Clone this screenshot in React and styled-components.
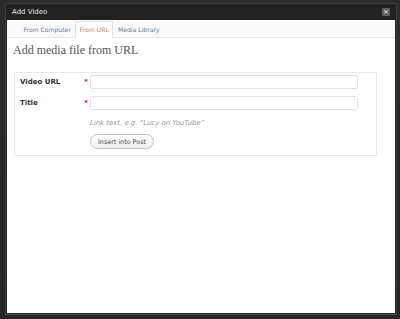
import React from "react";
import styled, { createGlobalStyle } from "styled-components";

const GlobalStyle = createGlobalStyle`
  html, body {
    margin: 0;
    padding: 0;
    width: 400px;
    height: 319px;
    overflow: hidden;
    background: #2a2a2a;
    font-family: "DejaVu Sans", "Liberation Sans", sans-serif;
  }
`;

const Page = styled.div`
  width: 400px;
  height: 319px;
  padding: 3px 3px 4px 5px;
  box-sizing: border-box;
  background: linear-gradient(#2c2c2c, #262626);
`;

const Dialog = styled.div`
  height: 100%;
  display: flex;
  flex-direction: column;
  border: 1px solid #3c3c3c;
  border-bottom-color: #555;
  background: #222;
  box-sizing: border-box;
  padding: 0 1px 1px 1px;
`;

const TitleBar = styled.div`
  height: 16px;
  display: flex;
  align-items: center;
  justify-content: space-between;
  padding: 0 5px 0 5px;
  color: #e6e6e6;
  font-size: 7px;
`;

const Close = styled.div`
  width: 8px;
  height: 8px;
  border-radius: 1px;
  background: #5e5e5e;
  color: #cfcfcf;
  display: flex;
  align-items: center;
  justify-content: center;
  font-size: 7px;
  font-weight: bold;
  line-height: 1;
`;

const Content = styled.div`
  flex: 1;
  background: #fff;
  display: flex;
  flex-direction: column;
`;

const Tabs = styled.div`
  height: 18px;
  display: flex;
  align-items: flex-end;
  padding-left: 12px;
  background: #f9f9f9;
  border-bottom: 1px solid #e3e3e3;
  box-sizing: border-box;
`;

const Tab = styled.div`
  height: 17px;
  display: flex;
  align-items: center;
  padding: 0 3.5px;
  margin-bottom: -1px;
  font-size: 6.1px;
  color: ${(p) => (p.$active ? "#e07a5a" : "#5d7f99")};
  background: ${(p) => (p.$active ? "#fff" : "transparent")};
  border: 1px solid ${(p) => (p.$active ? "#e3e3e3" : "transparent")};
  border-bottom-color: ${(p) => (p.$active ? "#fff" : "transparent")};
  border-radius: 2px 2px 0 0;
  box-sizing: border-box;
`;

const Heading = styled.h3`
  margin: 5px 0 0 6px;
  font-family: "Liberation Serif", "DejaVu Serif", serif;
  font-weight: normal;
  font-size: 12px;
  color: #555;
`;

const Box = styled.div`
  margin: 14px 18px 0 7px;
  border: 1px solid #e8e8e8;
  padding: 2px 18px 6px 5px;
  display: grid;
  grid-template-columns: 70px 1fr;
  row-gap: 7px;
`;

const Label = styled.div`
  display: flex;
  justify-content: space-between;
  align-items: center;
  font-size: 7px;
  font-weight: bold;
  color: #333;
  padding-right: 2px;
`;

const Star = styled.span`
  color: #f00;
  font-size: 7px;
  font-weight: bold;
`;

const Input = styled.div`
  height: 14px;
  border: 1px solid #e2e2e2;
  border-radius: 2px;
  background: #fff;
  box-sizing: border-box;
`;

const Help = styled.div`
  grid-column: 2;
  margin-top: 2px;
  font-size: 6.9px;
  font-style: italic;
  color: #999;
`;

const Button = styled.div`
  grid-column: 2;
  justify-self: start;
  margin-top: 0;
  width: 64px;
  height: 15px;
  box-sizing: border-box;
  border: 1px solid #c4c4c4;
  border-radius: 8px;
  background: linear-gradient(#fefefe, #eeeeee);
  color: #464646;
  font-size: 6.4px;
  display: flex;
  align-items: center;
  justify-content: center;
`;

const App = () => (
  <Page>
    <GlobalStyle />
    <Dialog>
      <TitleBar>
        <span>Add Video</span>
        <Close>×</Close>
      </TitleBar>
      <Content>
        <Tabs>
          <Tab>From Computer</Tab>
          <Tab $active>From URL</Tab>
          <Tab>Media Library</Tab>
        </Tabs>
        <Heading>Add media file from URL</Heading>
        <Box>
          <Label>
            Video URL <Star>*</Star>
          </Label>
          <Input />
          <Label>
            Title <Star>*</Star>
          </Label>
          <Input />
          <Help>Link text, e.g. “Lucy on YouTube”</Help>
          <Button>Insert into Post</Button>
        </Box>
      </Content>
    </Dialog>
  </Page>
);

export default App;
